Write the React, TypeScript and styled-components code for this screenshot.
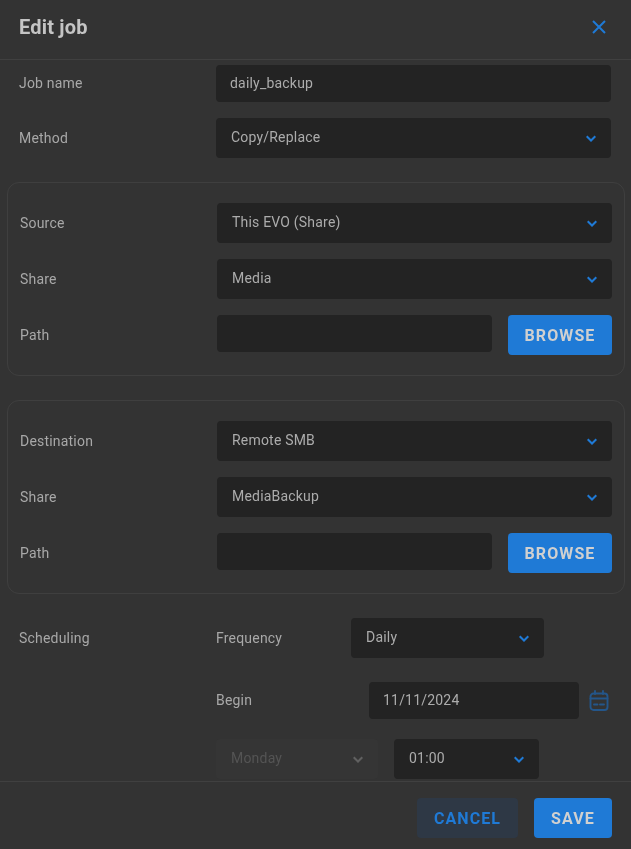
import React from "react";
import styled, { createGlobalStyle } from "styled-components";

const Global = createGlobalStyle`
  html, body { margin: 0; padding: 0; background: #333333; overflow: hidden; }
  * { box-sizing: border-box; }
`;

const Dialog = styled.div`
  width: 631px; height: 849px; display: flex; flex-direction: column;
  background: #333333; color: #acacac; transform: translateZ(0); will-change: transform;
  font-family: Roboto, "Liberation Sans", sans-serif; font-size: 14px; letter-spacing: 0.2px;
`;
const Header = styled.header`
  flex: none; height: 60px; display: flex; align-items: center; justify-content: space-between;
  padding: 0 22px 5px 19px; border-bottom: 1px solid #404040;
`;
const Title = styled.h2`
  margin: 0; font-size: 20px; font-weight: 700; color: #c4c4c4; letter-spacing: 0.2px;
`;
const CloseButton = styled.button`
  border: 0; background: none; padding: 0; width: 20px; height: 20px; display: flex;
  align-items: center; justify-content: center; color: #1f7ad6;
`;
const Body = styled.main`
  flex: 1; min-height: 0; overflow: hidden; padding: 5px 6px 0 7px;
  display: flex; flex-direction: column;
`;
const TopRows = styled.div`
  display: flex; flex-direction: column; gap: 16px; padding: 0 14px 0 12px; margin-bottom: 24px;
`;
const Row = styled.div`
  display: grid; grid-template-columns: 197px 1fr; align-items: center;
`;
const RowLabel = styled.label`
  color: #a8a8a8;
`;
const InputRowLabel = styled(RowLabel)`
  padding-bottom: 1px;
`;
const Field = styled.div<{ $w?: number }>`
  height: 37px; background: #232323; border-radius: 4px; display: flex; align-items: center;
  padding: 0 14px 1px; color: #acacac;
  ${(p) => (p.$w ? `width: ${p.$w}px; flex: none;` : "")}
`;
const SelectBox = styled.div<{ $w?: number; $disabled?: boolean }>`
  height: 40px; background: ${(p) => (p.$disabled ? "#353535" : "#232323")}; border-radius: 4px;
  display: flex; align-items: center; justify-content: space-between; padding: 0 15px 2px;
  color: ${(p) => (p.$disabled ? "#545454" : "#acacac")};
  ${(p) => (p.$w ? `width: ${p.$w}px; flex: none;` : "")}
`;
const Chevron = styled.svg<{ $disabled?: boolean }>`
  width: 10px; height: 7px; margin-top: 3px; flex: none; fill: none; stroke-width: 2;
  stroke: ${(p) => (p.$disabled ? "#606060" : "#1f7ad6")};
`;
const Panel = styled.section`
  flex: none; height: 194px; margin-bottom: 24px; border: 1px solid #3f3f3f; border-radius: 12px;
  padding: 20px 12px 0 12px; display: flex; flex-direction: column; gap: 16px;
`;
const PathControls = styled.div`
  display: flex; gap: 16px; align-items: flex-start;
`;
const PathRow = styled(Row)`
  align-items: start;
  & > label { line-height: 41px; }
`;
const PrimaryButton = styled.button`
  border: 0; height: 40px; border-radius: 4px; background: #1f7ad6; color: #d0d0d0;
  font-family: inherit; font-size: 16px; font-weight: 700; letter-spacing: 1.1px; padding: 0;
`;
const BrowseButton = styled(PrimaryButton)`
  width: 104px;
`;
const SaveButton = styled(PrimaryButton)`
  width: 78px;
`;
const CancelButton = styled(PrimaryButton)`
  width: 101px; background: #2e3845; color: #1f7ad6;
`;
const Schedule = styled.div`
  display: grid; grid-template-columns: 197px 1fr; padding-left: 12px;
`;
const ScheduleLabel = styled.div`
  line-height: 40px; color: #a8a8a8;
`;
const ScheduleFields = styled.div`
  display: flex; flex-direction: column; width: 396px;
`;
const FrequencyRow = styled.div`
  display: flex; align-items: center; height: 40px; margin-bottom: 24px;
`;
const BeginRow = styled.div`
  display: flex; align-items: center; height: 37px; margin-bottom: 20px;
`;
const TimeRow = styled.div`
  display: flex; gap: 16px;
`;
const FieldLabel = styled.span<{ $w: number }>`
  width: ${(p) => p.$w}px; flex: none; color: #a8a8a8;
`;
const BeginLabel = styled(FieldLabel)`
  padding-bottom: 1px;
`;
const CalendarIcon = styled.svg`
  margin-left: 10px; width: 20px; height: 21px; flex: none; fill: none;
  stroke: #24568a; stroke-width: 1.9; stroke-linecap: round; stroke-linejoin: round;
`;
const Footer = styled.footer`
  flex: none; height: 68px; border-top: 1px solid #404040; display: flex; justify-content: flex-end;
  align-items: flex-start; gap: 16px; padding: 16px 19px 0 0;
`;

const Down = ({ disabled }: { disabled?: boolean }) => (
  <Chevron $disabled={disabled} viewBox="0 0 10 7"><path d="M.7 1.200 5 5.500l4.300-4.300" /></Chevron>
);
const Select = ({ value, w, disabled }: { value: string; w?: number; disabled?: boolean }) => (
  <SelectBox $w={w} $disabled={disabled}>
    <span>{value}</span>
    <Down disabled={disabled} />
  </SelectBox>
);

const LocationPanel = ({ kind, kindValue, share }: { kind: string; kindValue: string; share: string }) => (
  <Panel>
    <Row><RowLabel>{kind}</RowLabel><Select value={kindValue} /></Row>
    <Row><RowLabel>Share</RowLabel><Select value={share} /></Row>
    <PathRow>
      <RowLabel>Path</RowLabel>
      <PathControls>
        <Field $w={275} />
        <BrowseButton>BROWSE</BrowseButton>
      </PathControls>
    </PathRow>
  </Panel>
);

export default function App() {
  return (
    <Dialog>
      <Global />
      <Header>
        <Title>Edit job</Title>
        <CloseButton aria-label="Close">
          <svg width="14" height="14" viewBox="0 0 14 14" fill="none" stroke="currentColor" strokeWidth="2">
            <path d="M1 1l12 12M13 1L1 13" />
          </svg>
        </CloseButton>
      </Header>
      <Body>
        <TopRows>
          <Row><InputRowLabel>Job name</InputRowLabel><Field>daily_backup</Field></Row>
          <Row><RowLabel>Method</RowLabel><Select value="Copy/Replace" /></Row>
        </TopRows>
        <LocationPanel kind="Source" kindValue="This EVO (Share)" share="Media" />
        <LocationPanel kind="Destination" kindValue="Remote SMB" share="MediaBackup" />
        <Schedule>
          <ScheduleLabel>Scheduling</ScheduleLabel>
          <ScheduleFields>
            <FrequencyRow>
              <FieldLabel $w={135}>Frequency</FieldLabel>
              <Select value="Daily" w={193} />
            </FrequencyRow>
            <BeginRow>
              <BeginLabel $w={153}>Begin</BeginLabel>
              <Field $w={210}>11/11/2024</Field>
              <CalendarIcon viewBox="0 0 20 21">
                <rect x="1.500" y="3.500" width="17" height="16.500" rx="3" />
                <path d="M1.500 8.500h17M6 1v3M14 1v3M5 14.500h3.500M11 14.500h4" />
              </CalendarIcon>
            </BeginRow>
            <TimeRow>
              <Select value="Monday" w={162} disabled />
              <Select value="01:00" w={145} />
            </TimeRow>
          </ScheduleFields>
        </Schedule>
      </Body>
      <Footer>
        <CancelButton>CANCEL</CancelButton>
        <SaveButton>SAVE</SaveButton>
      </Footer>
    </Dialog>
  );
}
